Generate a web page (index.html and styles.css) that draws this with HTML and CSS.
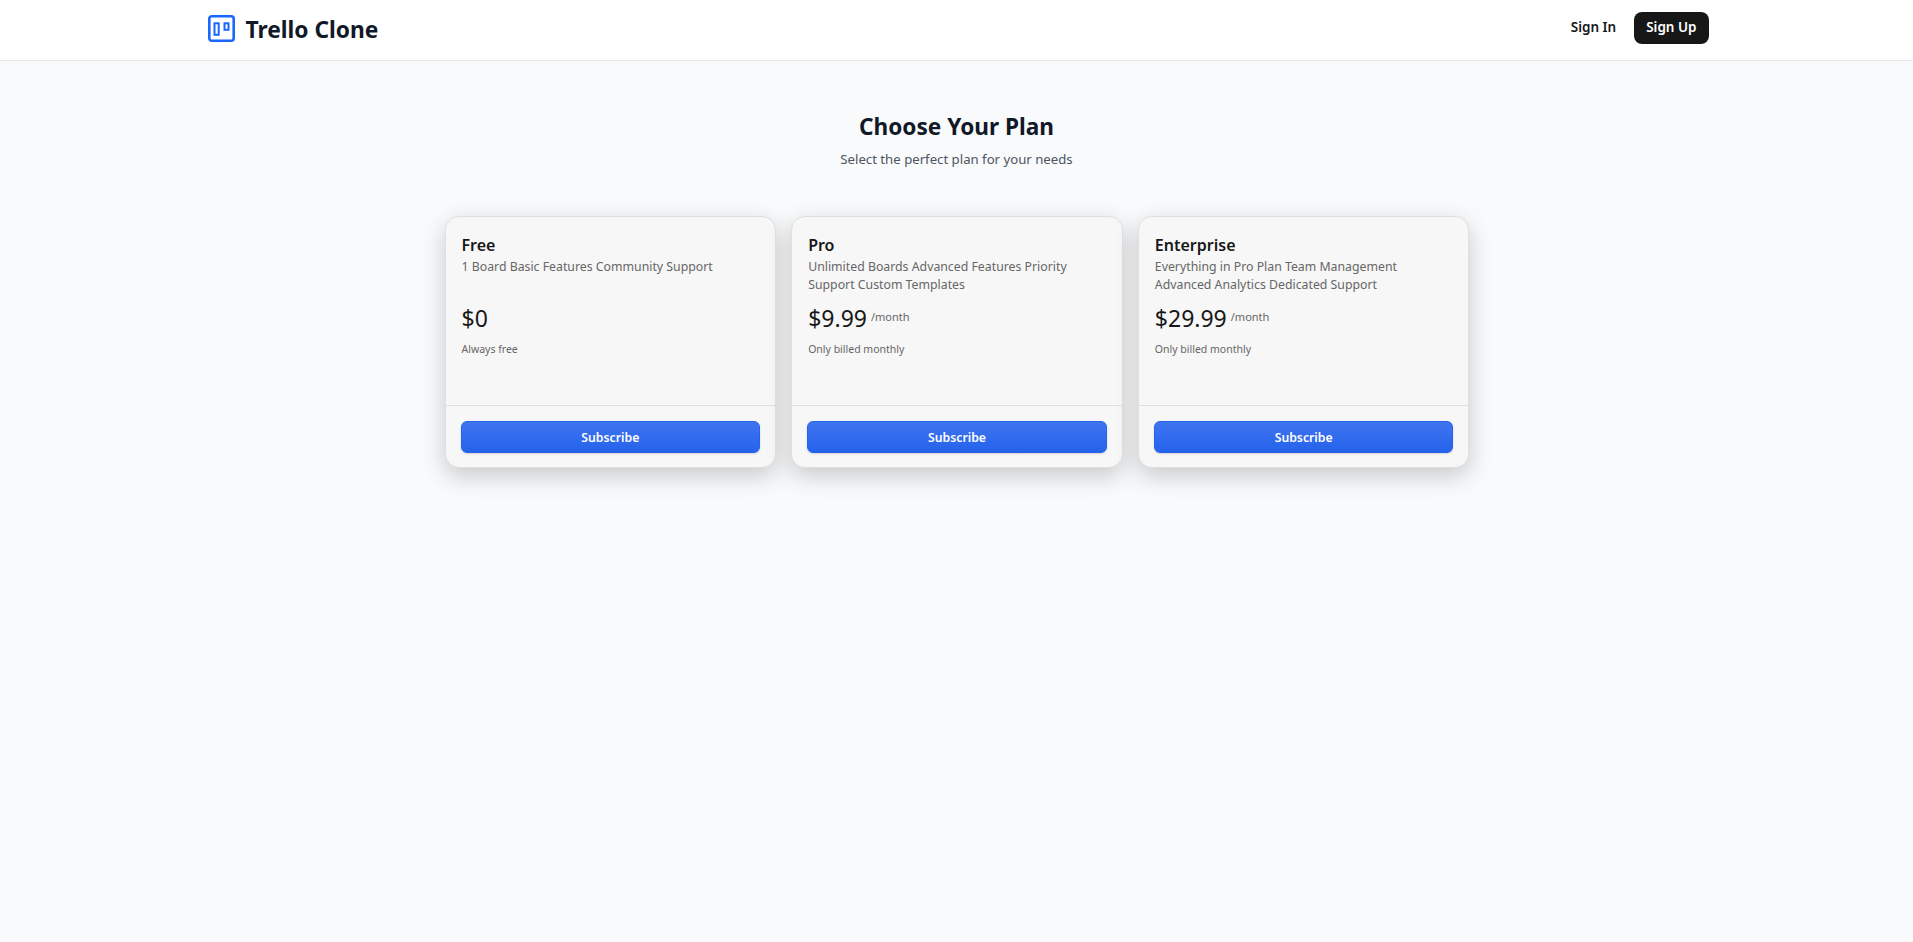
FILE: index.html
```html
<!DOCTYPE html>
<html lang="en">
<head>
  <meta charset="UTF-8" />
  <meta name="viewport" content="width=device-width, initial-scale=1.0" />
  <title>Trello Clone</title>
  <link rel="stylesheet" href="styles.css">
</head>
<body>

<header class="navbar">
  <div class="navbar-inner">
    <a class="brand" href="#">
      <svg class="brand-icon" width="27" height="27" viewBox="0 0 27 27" fill="none" stroke="#1a66ff">
        <rect x="1.3" y="1.3" width="24.4" height="24.4" rx="2.5" stroke-width="2.6" />
        <rect x="6.5" y="8.3" width="4.2" height="11.5" stroke-width="2" />
        <rect x="16.5" y="8.3" width="4" height="6.5" stroke-width="2" />
      </svg>
      <span class="brand-name">Trello Clone</span>
    </a>
    <nav class="nav-actions">
      <a class="nav-link" href="#">Sign In</a>
      <a class="nav-button" href="#">Sign Up</a>
    </nav>
  </div>
</header>

<main class="pricing">
  <h1 class="pricing-title">Choose Your Plan</h1>
  <p class="pricing-sub">Select the perfect plan for your needs</p>

  <div class="plans">
    <section class="plan">
      <div class="plan-body">
        <h2 class="plan-name">Free</h2>
        <p class="plan-desc">1 Board Basic Features Community Support</p>
        <div class="plan-price"><span class="amount">$0</span></div>
        <p class="plan-note">Always free</p>
      </div>
      <div class="plan-footer"><button class="subscribe">Subscribe</button></div>
    </section>

    <section class="plan">
      <div class="plan-body">
        <h2 class="plan-name">Pro</h2>
        <p class="plan-desc">Unlimited Boards Advanced Features Priority Support Custom Templates</p>
        <div class="plan-price"><span class="amount">$9.99</span><span class="period">/month</span></div>
        <p class="plan-note">Only billed monthly</p>
      </div>
      <div class="plan-footer"><button class="subscribe">Subscribe</button></div>
    </section>

    <section class="plan">
      <div class="plan-body">
        <h2 class="plan-name">Enterprise</h2>
        <p class="plan-desc">Everything in Pro Plan Team Management Advanced Analytics Dedicated Support</p>
        <div class="plan-price"><span class="amount">$29.99</span><span class="period">/month</span></div>
        <p class="plan-note">Only billed monthly</p>
      </div>
      <div class="plan-footer"><button class="subscribe">Subscribe</button></div>
    </section>
  </div>
</main>

</body>
</html>
```

FILE: styles.css
```css
* {
  box-sizing: border-box;
}
html, body {
  height: 100%;
}
body {
  margin: 0;
  background: #f9fafb;
  color: #111827;
  font-family: "Noto Sans", "Open Sans", sans-serif;
}
a {
  text-decoration: none;
  color: inherit;
}

/* Navbar */
.navbar {
  background: #fff;
  border-bottom: 1px solid #e5e7eb;
  height: 61px;
}
.navbar-inner {
  max-width: 1536px;
  height: 56px;
  margin: 0 auto;
  padding: 0 16px;
  display: flex;
  align-items: center;
  justify-content: space-between;
}
.brand {
  display: flex;
  align-items: center;
  gap: 11px;
  margin-left: 3px;
}
.brand-icon {
  display: block;
}
.brand-name {
  margin-top: 3px;
  font-size: 22.75px;
  font-weight: 700;
  color: #111827;
}
.nav-actions {
  display: flex;
  align-items: center;
  gap: 6px;
}
.nav-link,
.nav-button {
  font-size: 13.5px;
  font-weight: 600;
  line-height: 19px;
  padding: 6px 12px;
  height: 32px;
  border-radius: 8px;
}
.nav-link {
  color: #171717;
}
.nav-button {
  background: #171717;
  color: #fff;
}

/* Pricing */
.pricing {
  padding-top: 50px;
}
.pricing-title {
  margin: 0;
  text-align: center;
  font-size: 22.6px;
  line-height: 32px;
  font-weight: 700;
  color: #111827;
}
.pricing-sub {
  margin: 6px 0 0;
  text-align: center;
  font-size: 13.2px;
  font-weight: 400;
  line-height: 20px;
  color: #4b5563;
}
.plans {
  width: 1026px;
  margin: 47px auto 0;
  padding-left: 1px;
  display: grid;
  grid-template-columns: repeat(3, 1fr);
  gap: 15px;
}
.plan {
  height: 252px;
  background: #f7f7f7;
  border: 1px solid #e0e0e0;
  border-radius: 14px;
  box-shadow: 0 8px 24px rgba(0,0,0,0.2);
  display: flex;
  flex-direction: column;
}
.plan-body {
  flex: 1;
  padding: 18px 16px 16px;
}
.plan-name {
  margin: 0;
  font-size: 16px;
  line-height: 20px;
  font-weight: 600;
  color: #171717;
}
.plan-desc {
  margin: 0;
  height: 40px;
  padding-top: 3px;
  font-size: 12.3px;
  line-height: 18px;
  color: #666;
}
.plan-price {
  margin-top: 7px;
  display: flex;
  align-items: flex-start;
  height: 32px;
}
.amount {
  font-size: 23px;
  line-height: 32px;
  color: #171717;
}
.period {
  margin-left: 4px;
  padding-top: 7px;
  font-size: 11px;
  line-height: 16px;
  color: #666;
}
.plan-note {
  margin: 7px 0 0;
  font-size: 10.5px;
  line-height: 16px;
  color: #666;
}
.plan-footer {
  border-top: 1px solid #e0e0e0;
  padding: 15px 15px 14px;
}
.subscribe {
  display: block;
  width: 100%;
  height: 32px;
  border: 1px solid #2563eb;
  border-radius: 6px;
  background: linear-gradient(#3f74f0, #2563eb);
  box-shadow: 0 1px 2px rgba(0,0,0,0.15);
  color: #fff;
  font-family: inherit;
  font-size: 12.25px;
  font-weight: 600;
}
```
